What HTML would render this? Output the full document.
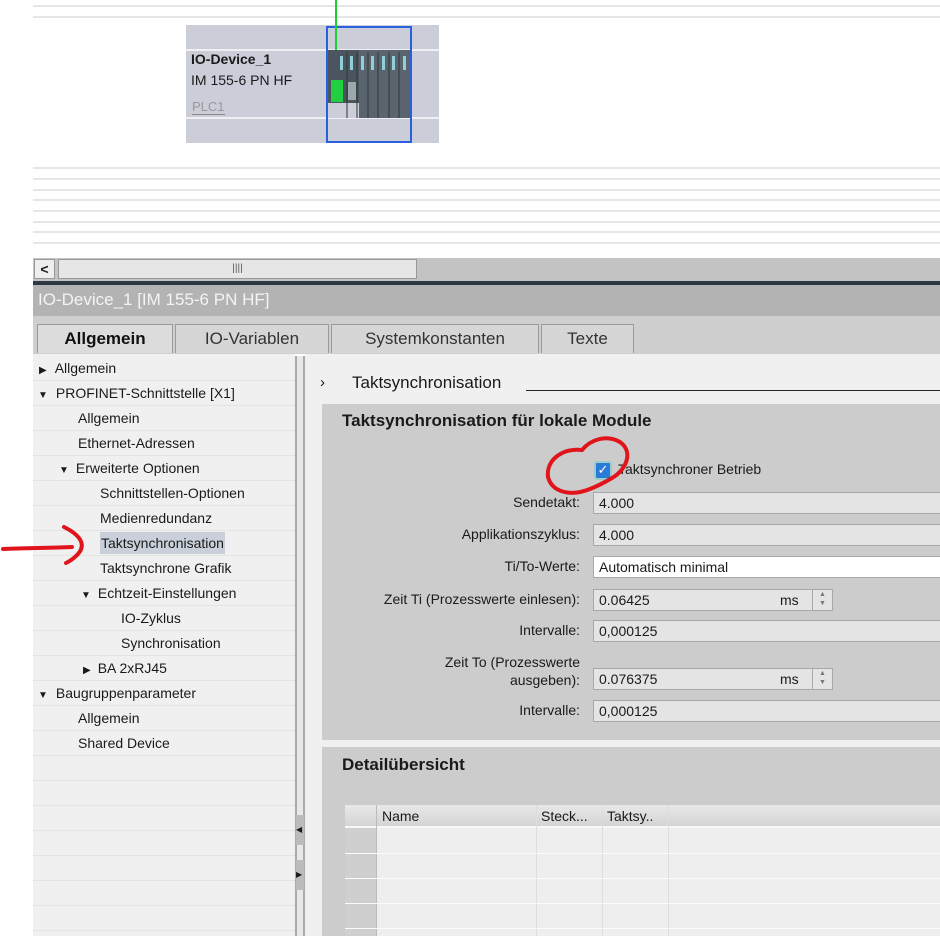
<!DOCTYPE html>
<html><head><meta charset="utf-8"><style>
*{margin:0;padding:0;box-sizing:border-box}
body{width:940px;height:936px;overflow:hidden;background:#fff;font-family:"Liberation Sans","DejaVu Sans",sans-serif;position:relative;color:#1a1a1a}
.a{position:absolute}
.hl{position:absolute;left:33px;right:0;height:2px;background:#e6e6e6}
.t{position:absolute;font-size:14px;white-space:nowrap}
.nav div{position:absolute;left:0;width:262px;height:25px;border-bottom:1px solid #e4e4e4;font-size:14px;line-height:25px;white-space:nowrap}
.lab{position:absolute;right:360px;font-size:14px;text-align:right;white-space:nowrap}
.inp{position:absolute;left:593px;right:-2px;height:22px;background:#e4e4e4;border:1px solid #a8a8a8;font-size:14px;line-height:20px;padding-left:5px}
.tab{position:absolute;top:324px;height:29px;background:#d6d6d6;border:1px solid #9a9a9a;border-bottom:none;font-size:17px;line-height:28px;text-align:center;color:#333}
</style></head><body>
<div class="hl" style="top:5px"></div><div class="hl" style="top:16px"></div>
<div class="hl" style="top:167px"></div><div class="hl" style="top:178px"></div><div class="hl" style="top:189px"></div><div class="hl" style="top:199px"></div><div class="hl" style="top:210px"></div><div class="hl" style="top:221px"></div><div class="hl" style="top:231px"></div><div class="hl" style="top:242px"></div>
<div class="a" style="left:186px;top:25px;width:253px;height:118px;background:#cbcdd9"></div>
<div class="a" style="left:186px;top:49px;width:253px;height:2px;background:#eef0f4"></div>
<div class="a" style="left:186px;top:117px;width:253px;height:2px;background:#eef0f4"></div>
<div class="t" style="left:191px;top:51px;font-weight:bold;font-size:14px">IO-Device_1</div>
<div class="t" style="left:191px;top:72px;font-size:14px">IM 155-6 PN HF</div>
<div class="t" style="left:192px;top:99px;font-size:13px;color:#999;border-bottom:1px solid #888;line-height:15px">PLC1</div>
<div class="a" style="left:328px;top:50px;width:82px;height:68px;background:#59646e"></div>
<div class="a" style="left:328px;top:50px;width:31px;height:53px;background:#4a5560"></div>
<div class="a" style="left:328px;top:103px;width:31px;height:15px;background:#cbcdd9"></div>
<div class="a" style="left:331px;top:80px;width:12px;height:22px;background:#20d040"></div>
<div class="a" style="left:348px;top:82px;width:8px;height:18px;background:#9aa"></div>
<svg class="a" style="left:340px;top:52px" width="70" height="66"><g fill="#8fd0d8"><rect x="0" y="4" width="3" height="14"/><rect x="10" y="4" width="3" height="14"/><rect x="21" y="4" width="3" height="14"/><rect x="31" y="4" width="3" height="14"/><rect x="42" y="4" width="3" height="14"/><rect x="52" y="4" width="3" height="14"/><rect x="63" y="4" width="3" height="14"/></g><g stroke="#333" stroke-width="1"><line x1="7" y1="0" x2="7" y2="66"/><line x1="17" y1="0" x2="17" y2="66"/><line x1="28" y1="0" x2="28" y2="66"/><line x1="38" y1="0" x2="38" y2="66"/><line x1="49" y1="0" x2="49" y2="66"/><line x1="59" y1="0" x2="59" y2="66"/></g></svg>
<div class="a" style="left:326px;top:26px;width:86px;height:117px;border:2px solid #2a5fe0"></div>
<div class="a" style="left:335px;top:0;width:2px;height:50px;background:#18d030"></div>
<div class="a" style="left:33px;top:258px;width:907px;height:23px;background:#c3c3c3"></div>
<div class="a" style="left:34px;top:259px;width:21px;height:20px;background:#eee;border:1px solid #999;font-size:14px;line-height:18px;text-align:center;font-weight:bold">&lt;</div>
<div class="a" style="left:58px;top:259px;width:359px;height:20px;background:#e6e6e6;border:1px solid #999;font-size:10px;text-align:center;line-height:18px;color:#555">||||</div>
<div class="a" style="left:33px;top:281px;width:907px;height:4px;background:#2c3944"></div>
<div class="a" style="left:33px;top:285px;width:907px;height:31px;background:#b3b3b3"></div>
<div class="t" style="left:38px;top:290px;font-size:17px;color:#f4f4f4">IO-Device_1 [IM 155-6 PN HF]</div>
<div class="a" style="left:33px;top:316px;width:907px;height:38px;background:#cfcfcf"></div>
<div class="tab" style="left:37px;width:136px;background:#dcdcdc;font-weight:bold;color:#111">Allgemein</div>
<div class="tab" style="left:175px;width:154px">IO-Variablen</div>
<div class="tab" style="left:331px;width:208px">Systemkonstanten</div>
<div class="tab" style="left:541px;width:93px">Texte</div>
<div class="a" style="left:33px;top:354px;width:262px;height:582px;background:#f0f0f0"></div>
<div class="a nav" style="left:33px;top:356px;width:262px">
<div style="top:0"><span style="font-size:10px;margin:0 8px 0 6px">▶</span>Allgemein</div>
<div style="top:25px"><span style="font-size:10px;margin:0 8px 0 5px">▼</span>PROFINET-Schnittstelle [X1]</div>
<div style="top:50px;padding-left:45px">Allgemein</div>
<div style="top:75px;padding-left:45px">Ethernet-Adressen</div>
<div style="top:100px;padding-left:26px"><span style="font-size:10px;margin-right:7px">▼</span>Erweiterte Optionen</div>
<div style="top:125px;padding-left:67px">Schnittstellen-Optionen</div>
<div style="top:150px;padding-left:67px">Medienredundanz</div>
<div style="top:175px;padding-left:67px"><span style="background:#c9d0da;padding:3px 1px">Taktsynchronisation</span></div>
<div style="top:200px;padding-left:67px">Taktsynchrone Grafik</div>
<div style="top:225px;padding-left:48px"><span style="font-size:10px;margin-right:7px">▼</span>Echtzeit-Einstellungen</div>
<div style="top:250px;padding-left:88px">IO-Zyklus</div>
<div style="top:275px;padding-left:88px">Synchronisation</div>
<div style="top:300px;padding-left:50px"><span style="font-size:10px;margin-right:7px">▶</span>BA 2xRJ45</div>
<div style="top:325px"><span style="font-size:10px;margin:0 8px 0 5px">▼</span>Baugruppenparameter</div>
<div style="top:350px;padding-left:45px">Allgemein</div>
<div style="top:375px;padding-left:45px">Shared Device</div>
<div style="top:400px"></div><div style="top:425px"></div><div style="top:450px"></div><div style="top:475px"></div><div style="top:500px"></div><div style="top:525px"></div><div style="top:550px"></div>
</div>
<div class="a" style="left:295px;top:356px;width:10px;height:580px;background:#e8e8e8;border-left:2px solid #aaa;border-right:2px solid #aaa"></div>
<div class="a" style="left:296px;top:815px;width:8px;height:30px;background:#bbb;font-size:8px;line-height:30px">◀</div>
<div class="a" style="left:296px;top:860px;width:8px;height:30px;background:#bbb;font-size:8px;line-height:30px">▶</div>
<div class="a" style="left:305px;top:354px;width:635px;height:582px;background:#f0f0f0"></div>
<div class="t" style="left:320px;top:374px;font-size:15px">›</div>
<div class="t" style="left:352px;top:373px;font-size:17px">Taktsynchronisation</div>
<div class="a" style="left:526px;top:390px;width:414px;height:1px;background:#222"></div>
<div class="a" style="left:322px;top:404px;width:618px;height:336px;background:#cccccc"></div>
<div class="t" style="left:342px;top:411px;font-size:17px;font-weight:bold">Taktsynchronisation für lokale Module</div>
<div class="a" style="left:594px;top:461px;width:18px;height:19px;background:#2a7ad8;border:2px solid #9cc;border-radius:3px;color:#fff;font-size:13px;line-height:14px;text-align:center;font-weight:bold">✓</div>
<div class="t" style="left:618px;top:461px">Taktsynchroner Betrieb</div>
<div class="lab" style="top:494px">Sendetakt:</div><div class="inp" style="top:492px">4.000</div>
<div class="lab" style="top:526px">Applikationszyklus:</div><div class="inp" style="top:524px">4.000</div>
<div class="lab" style="top:558px">Ti/To-Werte:</div><div class="inp" style="top:556px;background:#fff">Automatisch minimal</div>
<div class="lab" style="top:591px">Zeit Ti (Prozesswerte einlesen):</div><div class="inp" style="top:589px;right:auto;width:240px">0.06425<span style="position:absolute;left:186px">ms</span><span style="position:absolute;right:0;top:0;width:20px;height:20px;border-left:1px solid #aaa;font-size:7px;line-height:9px;text-align:center;color:#777">▲<br>▼</span></div>
<div class="lab" style="top:622px">Intervalle:</div><div class="inp" style="top:620px">0,000125</div>
<div class="lab" style="top:653px;line-height:18px">Zeit To (Prozesswerte<br>ausgeben):</div><div class="inp" style="top:668px;right:auto;width:240px">0.076375<span style="position:absolute;left:186px">ms</span><span style="position:absolute;right:0;top:0;width:20px;height:20px;border-left:1px solid #aaa;font-size:7px;line-height:9px;text-align:center;color:#777">▲<br>▼</span></div>
<div class="lab" style="top:702px">Intervalle:</div><div class="inp" style="top:700px">0,000125</div>
<div class="a" style="left:322px;top:747px;width:618px;height:189px;background:#cccccc"></div>
<div class="t" style="left:342px;top:755px;font-size:17px;font-weight:bold">Detailübersicht</div>
<div class="a" style="left:345px;top:828px;width:595px;height:108px;background:#eeeeee"></div>
<div class="a" style="left:345px;top:828px;width:32px;height:108px;background:#cfcfcf"></div>
<div class="a" style="left:345px;top:805px;width:595px;height:23px;background:linear-gradient(#e8e8e8,#d4d4d4);border-bottom:2px solid #f8f8f8"></div>
<div class="a" style="left:376px;top:805px;width:1px;height:131px;background:#bbb"></div>
<div class="a" style="left:536px;top:805px;width:1px;height:131px;background:#ddd"></div>
<div class="a" style="left:602px;top:805px;width:1px;height:131px;background:#ddd"></div>
<div class="a" style="left:668px;top:805px;width:1px;height:131px;background:#ddd"></div>
<div class="t" style="left:382px;top:808px;font-size:14px">Name</div>
<div class="t" style="left:541px;top:808px;font-size:14px">Steck...</div>
<div class="t" style="left:607px;top:808px;font-size:14px">Taktsy..</div>
<div class="a" style="left:345px;top:853px;width:595px;height:1px;background:#fafafa"></div>
<div class="a" style="left:345px;top:878px;width:595px;height:1px;background:#fafafa"></div>
<div class="a" style="left:345px;top:903px;width:595px;height:1px;background:#fafafa"></div>
<div class="a" style="left:345px;top:928px;width:595px;height:1px;background:#fafafa"></div>
<svg class="a" style="left:0;top:0" width="940" height="936">
<path d="M3 549 C25 548 50 548 72 547 M64 527 C80 535 88 545 76 556 C72 560 68 562 66 563" stroke="#e0141a" stroke-width="4" fill="none" stroke-linecap="round"/>
<path d="M612 478 C626 470 634 452 620 442 C606 434 590 440 582 450 C562 448 546 460 548 477 C552 492 570 497 590 489 C600 485 607 481 612 478" stroke="#e0141a" stroke-width="4" fill="none" stroke-linecap="round"/>
</svg>
</body></html>
